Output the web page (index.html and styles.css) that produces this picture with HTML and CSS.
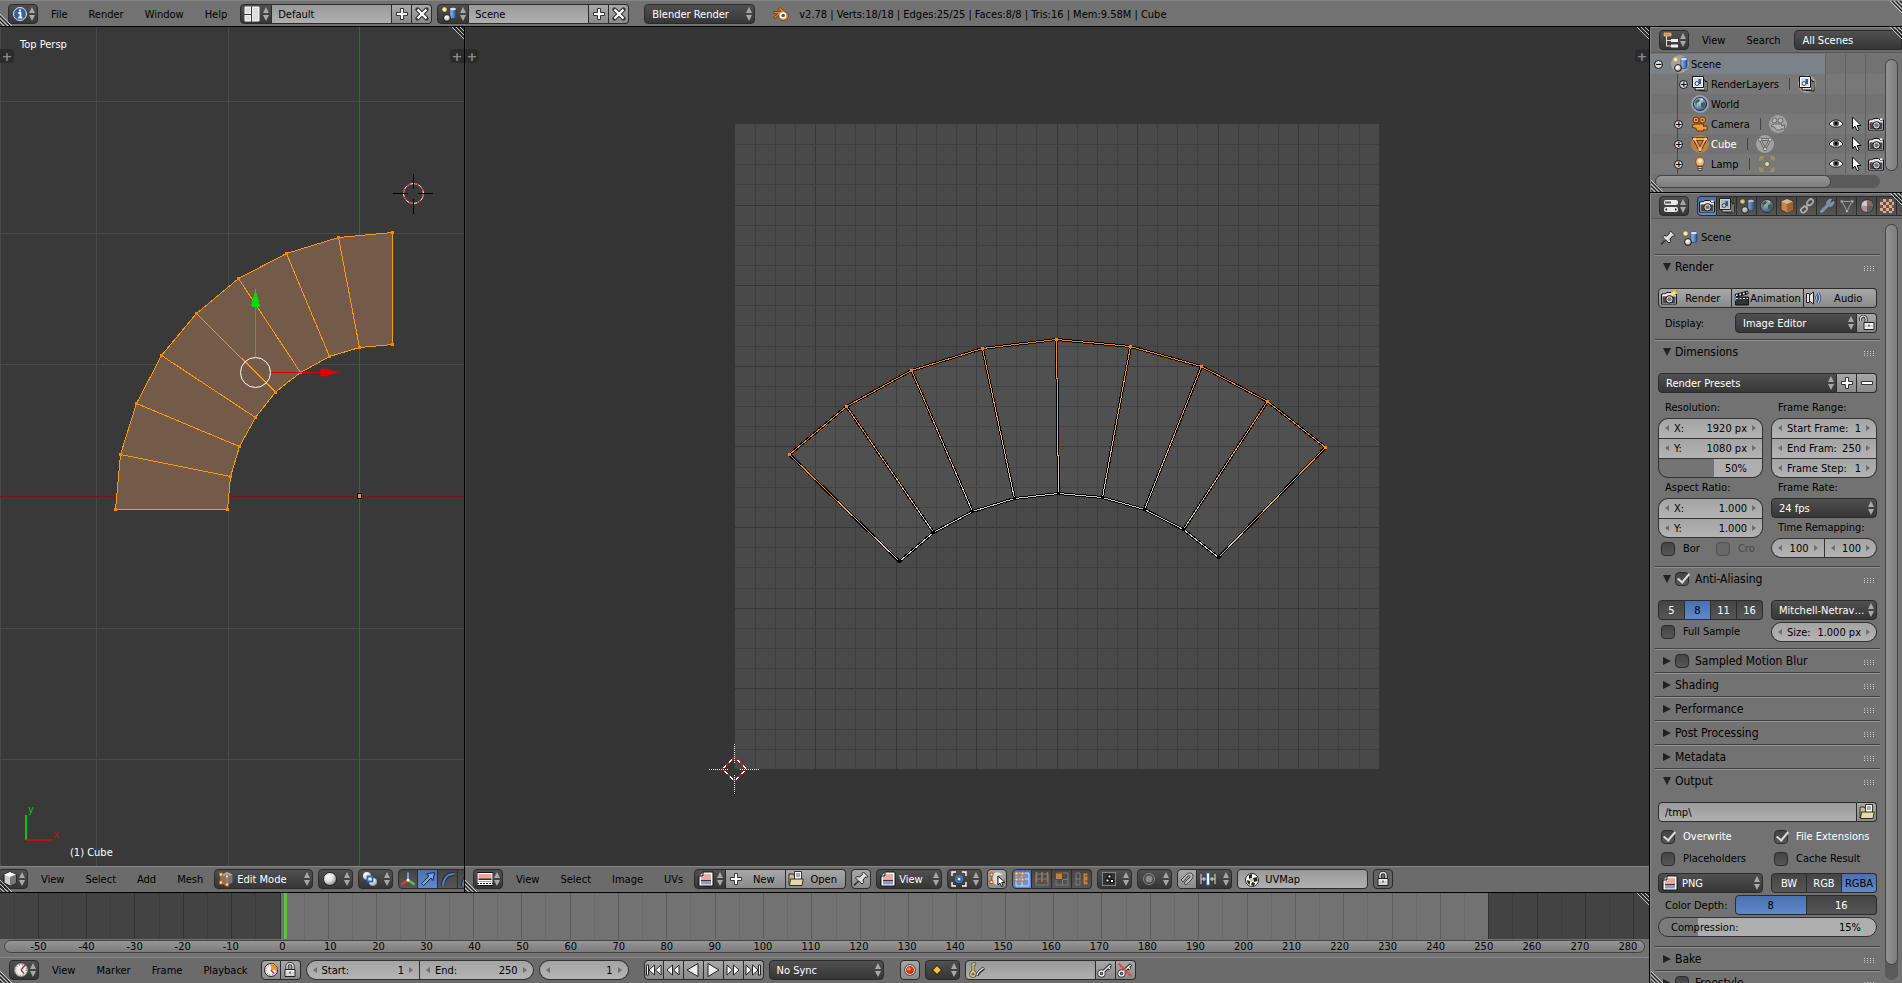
FILE: index.html
```html
<!DOCTYPE html>
<html lang="en">
<head>
    <meta charset="UTF-8">
    <meta name="viewport" content="width=device-width, initial-scale=1.0">
    <title>Blender</title>
    <link rel="stylesheet" href="styles.css">
</head>
<body>
    <!-- icon sprite -->
    <svg class="sprite" aria-hidden="true">
        <defs>
            <linearGradient id="g-blue" x1="0" x2="1"><stop offset="0" stop-color="#9fc0ee"/><stop offset="1" stop-color="#2a56a0"/></linearGradient>
            <radialGradient id="g-ball" cx=".35" cy=".3" r=".8"><stop offset="0" stop-color="#fff"/><stop offset=".5" stop-color="#ddd"/><stop offset="1" stop-color="#777"/></radialGradient>
            <radialGradient id="g-globe" cx=".35" cy=".3" r=".8"><stop offset="0" stop-color="#cfe0f5"/><stop offset="1" stop-color="#32527e"/></radialGradient>
        </defs>
        <symbol id="arrows" viewBox="0 0 8 14"><path d="M4 0l3 6H1zM4 14l3-6H1z" fill="#a8a8a8"/></symbol>
        <symbol id="corner" viewBox="0 0 12 12"><path d="M0 0l12 12M4 0l8 8M8 0l4 4" stroke="#c4c4c4"/><path d="M2 0l10 10M6 0l6 6M10 0l2 2" stroke="#222"/></symbol>
        <symbol id="corner-b" viewBox="0 0 12 12"><path d="M0 0l12 12M0 4l8 8M0 8l4 4" stroke="#c4c4c4"/><path d="M0 2l10 10M0 6l6 6M0 10l2 2" stroke="#222"/></symbol>
        <symbol id="info" viewBox="0 0 16 16"><circle cx="8" cy="8" r="6.5" fill="#3b5f9c" stroke="#dfe6f2"/><path d="M8 3.4v2M6.3 7H8.5v4.5M6.3 11.7h4" stroke="#fff" stroke-width="1.8" fill="none"/></symbol>
        <symbol id="layout" viewBox="0 0 16 16"><path d="M1 1h6v7H1zM1 9h6v6H1zM8 1h7v14H8z" fill="#ddd" stroke="#fff"/><path d="M7.5 1v14M1 8.5h6" stroke="#333"/></symbol>
        <symbol id="scene" viewBox="0 0 16 16"><path d="M9 3c0-2 6-2 6 0v8c0 2-6 2-6 0z" fill="url(#g-blue)" stroke="#1c3660" stroke-width=".6"/><ellipse cx="12" cy="3" rx="3" ry="1.3" fill="#cfe0f8"/><circle cx="6" cy="12" r="3.4" fill="url(#g-ball)" stroke="#111"/><circle cx="3.5" cy="3.5" r="2" fill="#fffbd0" stroke="#d5b92e"/></symbol>
        <symbol id="plus" viewBox="0 0 16 16"><path d="M6.5 2.5h3v4h4v3h-4v4h-3v-4h-4v-3h4z" fill="#fff" stroke="#333"/></symbol>
        <symbol id="minus" viewBox="0 0 16 16"><path d="M2.5 6.5h11v3h-11z" fill="#fff" stroke="#333"/></symbol>
        <symbol id="cross" viewBox="0 0 16 16"><path d="M3.5 3.5l9 9M12.5 3.5l-9 9" stroke="#333" stroke-width="4.4" stroke-linecap="round"/><path d="M3.5 3.5l9 9M12.5 3.5l-9 9" stroke="#fff" stroke-width="2.2"/></symbol>
        <symbol id="blender" viewBox="0 0 16 16"><path d="M1 5.5h7L5.5 3l1.5-1.5 7 5.5c2.500 2.500 1.500 7.500-3.500 7.500-4 0-5.800-3-5-5.500L2 12.500.8 11l4-3.500H1z" fill="#f0871c" stroke="#5a3207" stroke-width=".7"/><circle cx="10" cy="9.5" r="3.3" fill="#fff"/><circle cx="10.2" cy="9.5" r="1.8" fill="#2c5fae"/></symbol>
        <symbol id="outliner" viewBox="0 0 16 16"><path d="M1 1h7v3H1z" fill="#e8893a" stroke="#ffd9a8" stroke-width=".6"/><path d="M3.5 4v10H8M3.5 8.5H8" stroke="#ddd" fill="none"/><path d="M8 7h7v3H8zM8 12.5h7v3H8z" fill="#eee"/></symbol>
        <symbol id="layers" viewBox="0 0 16 16"><path d="M6 6.5l9-1v9.5l-8-.5z" fill="#efeecb" stroke="#111"/><path d="M3 4h10v10H3z" fill="#ddd" stroke="#111"/><path d="M.5.5h11v11H.5z" fill="#fff" stroke="#111"/><path d="M2 2h8v8H2z" fill="#c9dcf2"/><path d="M6.5 3H9v5H6.5z" fill="#2c5aa6"/><circle cx="5" cy="7.5" r="1.9" fill="#fff" stroke="#111" stroke-width=".8"/></symbol>
        <symbol id="world" viewBox="0 0 16 16"><circle cx="8" cy="8" r="6.5" fill="url(#g-globe)" stroke="#1d2c44"/><path d="M3 5l3-2 2 1-1 2-2 1-1 3zM9 7l3-1 1.5 2-1.5 3-2 1-1-2z" fill="#40663d"/><path d="M8 2l3 1-1 2z" fill="#dfeaf7"/></symbol>
        <symbol id="movie" viewBox="0 0 16 16"><g fill="#f0993c" stroke="#6a3306"><circle cx="4" cy="4" r="3"/><circle cx="10.5" cy="4" r="3"/><path d="M3.5 8h8v2.5l3.5-1v5l-3.5-1V15h-6l-2-3-3-.5V9z"/></g><g fill="#6a3306"><circle cx="4" cy="4" r="1"/><circle cx="10.5" cy="4" r="1"/></g></symbol>
        <symbol id="movie-data" viewBox="0 0 16 16"><g fill="#b4b4b4" stroke="#6b6b6b"><circle cx="4.5" cy="4.5" r="2.5"/><circle cx="10.5" cy="4.5" r="2.5"/><path d="M4.5 8h7v2l3-1v4.5l-3-1V14h-5l-2-3-3-.5V9z"/></g></symbol>
        <symbol id="mesh" viewBox="0 0 16 16"><path d="M2.5 3h11L8 13.5z" fill="none" stroke="#4a2a08" stroke-width="3.4"/><path d="M2.5 3h11L8 13.5z" fill="none" stroke="#f6a555" stroke-width="1.8"/><circle cx="2.5" cy="3" r="1.6" fill="#ffc98c"/><circle cx="13.5" cy="3" r="1.6" fill="#ffc98c"/><circle cx="8" cy="13.5" r="1.6" fill="#ffc98c"/></symbol>
        <symbol id="mesh-data" viewBox="0 0 16 16"><path d="M3 3.5h10L8 13z" fill="none" stroke="#555" stroke-width="2.4"/><path d="M3 3.5h10L8 13z" fill="none" stroke="#bbb"/><g fill="#d0d0d0" stroke="#555" stroke-width=".7"><circle cx="3" cy="3.5" r="1.7"/><circle cx="13" cy="3.5" r="1.7"/><circle cx="8" cy="13" r="1.7"/></g></symbol>
        <symbol id="lamp" viewBox="0 0 16 16"><path d="M5.5 10C2 6 4 1 8 1s6 5 2.500 9z" fill="#f7b877" stroke="#7a4510"/><circle cx="8" cy="5" r="1.8" fill="#fff3df"/><path d="M6 10.5h4v4H6z" fill="#ddd" stroke="#444"/><path d="M6 12.5h4" stroke="#444"/></symbol>
        <symbol id="lamp-data" viewBox="0 0 16 16"><circle cx="8" cy="8" r="2.5" fill="#dfdca6" stroke="#6e6942"/><path d="M1 5V1h4M11 1h4v4M15 11v4h-4M5 15H1v-4M2 2l2.500 2.500M14 2l-2.500 2.500M14 14l-2.500-2.500M2 14l2.500-2.500" fill="none" stroke="#b8a552"/></symbol>
        <symbol id="eye" viewBox="0 0 16 16"><path d="M1 8c4-5.500 10-5.500 14 0-4 4.500-10 4.500-14 0z" fill="#eee" stroke="#222"/><circle cx="8" cy="7.5" r="3" fill="#555"/><circle cx="8" cy="7.5" r="1.4" fill="#000"/></symbol>
        <symbol id="pointer" viewBox="0 0 16 16"><path d="M4.5 1v11.5l2.600-2.300 1.900 4.500 2-.9-1.900-4.300H13z" fill="#fff" stroke="#111"/></symbol>
        <symbol id="photo" viewBox="0 0 16 16"><path d="M.5 4h4l1-1.500h5L12 4h3.500v10H.5z" fill="#e4e4e4" stroke="#151515"/><path d="M1.5 6.500h13V13h-13z" fill="#4a4a4a"/><path d="M2 5h3.5" stroke="#fff"/><circle cx="8.500" cy="9.300" r="3.700" fill="#d8d8d8" stroke="#111"/><circle cx="8.500" cy="9.300" r="2" fill="#6b6f80"/><path d="M12 2.500h2.500V4H12z" fill="#fff"/><circle cx="3" cy="7" r="1" fill="#e03020"/></symbol>
        <symbol id="photo-new" viewBox="0 0 16 16"><use href="#photo"/><path d="M13 0v6M10 3h6" stroke="#f0c020" stroke-width="2"/><path d="M13 1.5v3M11.5 3h3" stroke="#fff8c0"/></symbol>
        <symbol id="props" viewBox="0 0 16 16"><rect x="1" y="2" width="14" height="5" rx="2" fill="#e8e8e8"/><path d="M2 3.5h6v2H2z" fill="#555"/><rect x="1" y="9" width="14" height="5" rx="2" fill="#e8e8e8"/><path d="M4 10l-2 1.5L4 13zM12 10l2 1.5-2 1.5z" fill="#222"/></symbol>
        <symbol id="cube" viewBox="0 0 16 16"><path d="M8 1l6 2.500v8.500L8 15l-6-3V3.500z" fill="#e89a50" stroke="#4a2a08"/><path d="M8 1l6 2.500L8 6 2 3.500z" fill="#ffdcae"/><path d="M8 6l6-2.500v8.500L8 15z" fill="#bb6c27"/></symbol>
        <symbol id="link" viewBox="0 0 16 16"><g fill="none" stroke="#ccc" stroke-width="1.7"><rect x="7.5" y="2" width="7" height="4.6" rx="2.3" transform="rotate(-45 11 4.3)"/><rect x="1.5" y="9.2" width="7" height="4.6" rx="2.3" transform="rotate(-45 5 11.5)"/><path d="M6 10l4-4"/></g></symbol>
        <symbol id="wrench" viewBox="0 0 16 16"><path d="M2 12.5l6-6C7 3.500 9.500.8 12.500 1.500L10.500 4l1.500 1.500L14.500 3.500c.7 3-2 5.500-5 4.500l-6 6c-1.500 1-2.500-.3-1.500-1.500z" fill="#7f9fd0" stroke="#d5dff0" stroke-width=".7"/></symbol>
        <symbol id="material" viewBox="0 0 16 16"><circle cx="8" cy="8" r="6.3" fill="url(#g-ball)" stroke="#222"/><path d="M8 8V2a6 6 0 016 6z" fill="#b06a6a"/><path d="M8 8h6a6 6 0 01-6 6z" fill="#666"/><path d="M8 8H2a6 6 0 006 6z" fill="#c9a9a9"/></symbol>
        <symbol id="texture" viewBox="0 0 16 16"><path d="M1 1h14v14H1z" fill="#ecd7c2"/><path d="M1 1h3v3H1zM7 1h3v3H7zM13 1h2v3h-2zM4 4h3v3H4zM10 4h3v3h-3zM1 7h3v3H1zM7 7h3v3H7zM13 7h2v3h-2zM4 10h3v3H4zM10 10h3v3h-3zM1 13h3v2H1zM7 13h3v2H7zM13 13h2v2h-2z" fill="#8e4a2f"/></symbol>
        <symbol id="pin" viewBox="0 0 16 16"><path d="M10.5 1l4.500 4.500-1.500.8-1-.3-2.500 3 .5 2.500L9 13 5.800 10 1.500 14.500l-.5-.5L5 9.500 2.500 7 4 5.500l2.500.5 3-2.500-.3-1z" fill="#ddd" stroke="#222"/></symbol>
        <symbol id="clapper" viewBox="0 0 16 16"><path d="M1 4.5L13.5 1l.8 2.800L2 7z" fill="#fff" stroke="#111"/><path d="M4 4l1 2M7.5 3l1 2M11 2l1 2" stroke="#111" stroke-width="2"/><path d="M1.5 7h13v8h-13z" fill="#333" stroke="#111"/><path d="M2 8.5h12" stroke="#ddd" stroke-dasharray="2 1.5"/><path d="M0 6h2v5H0z" fill="#4c86d8"/></symbol>
        <symbol id="speaker" viewBox="0 0 16 16"><path d="M.5 3.500h3v9h-3zM3.500 5L7.500 2v12l-4-3z" fill="#e4e4e4" stroke="#222"/><path d="M9.500 5q2 3 0 6M12 3q3.500 5 0 10" stroke="#2c3d63" stroke-width="2.600" fill="none"/><path d="M9.500 5q2 3 0 6M12 3q3.500 5 0 10" stroke="#a9c1f0" stroke-width="1.300" fill="none"/></symbol>
        <symbol id="lock" viewBox="0 0 16 16"><path d="M5 7V4.5a3 3 0 016 0V7" fill="none" stroke="#222" stroke-width="3.2"/><path d="M5 8V4.5a3 3 0 016 0V8" fill="none" stroke="#ddd" stroke-width="1.5"/><path d="M3 7.5h10v7H3z" fill="#eee" stroke="#222"/><path d="M4 11h8M4 13h8" stroke="#bbb"/><path d="M8 9.5v2" stroke="#111"/></symbol>
        <symbol id="unlock" viewBox="0 0 16 16"><path d="M1.5 6V4a2.800 2.800 0 015.600 0v4" fill="none" stroke="#222" stroke-width="3"/><path d="M1.5 6V4a2.800 2.800 0 015.600 0v4" fill="none" stroke="#ddd" stroke-width="1.3"/><path d="M5 7.5h10v7H5z" fill="#eee" stroke="#222"/><path d="M6 11h8" stroke="#bbb"/><path d="M10 9.5v2" stroke="#111"/></symbol>
        <symbol id="folder" viewBox="0 0 16 16"><path d="M1 3h4l1 1.5h3V14H1z" fill="#c9bf94" stroke="#332e1c"/><path d="M6.5.5h7v9h-7z" fill="#fff" stroke="#333"/><path d="M8 3h4M8 5h4" stroke="#555"/><path d="M2.5 8h12.800L14 14.500H1.500z" fill="#e2d9b0" stroke="#332e1c"/></symbol>
        <symbol id="image" viewBox="0 0 16 16"><path d="M5 1h10v14H1V5z" fill="#fff" stroke="#111"/><path d="M5 1v4H1" fill="#ccc" stroke="#111"/><path d="M3 6h10v3H3zM6 3h7v3H6z" fill="#e9aaa0"/><path d="M3 9h10v1.200H3z" fill="#54302c"/><path d="M3 10h10v3.500H3z" fill="#8d9cc4"/></symbol>
        <symbol id="uv-editor" viewBox="0 0 16 16"><path d="M0 1.5h16v13H0z" fill="#fff" stroke="#111"/><path d="M1.5 3h13v5h-13z" fill="#e9a49b"/><path d="M1.5 7.5h13v1.5h-13z" fill="#3a2928"/><path d="M1.5 10h13v1h-13z" fill="#8d9cc4"/><path d="M0 12.5h16" stroke="#222" stroke-dasharray="2 1"/></symbol>
        <symbol id="view3d" viewBox="0 0 16 16"><path d="M8 1l6 2.500v8.500L8 15l-6-3V3.500z" fill="#ccc" stroke="#111"/><path d="M8 1l6 2.500L8 6 2 3.500z" fill="#fff"/><path d="M8 6l6-2.500v8.500L8 15z" fill="#777"/></symbol>
        <symbol id="edit" viewBox="0 0 16 16"><path d="M9 1l5.500 2.500v8L9 14 4 11.500V3.500z" fill="#777"/><path d="M9 1l5.500 2.500L9 6 4 3.500z" fill="#aaa"/><path d="M3 3.500V12l6 2V5.500z" fill="none" stroke="#d99550"/><g fill="#ffe0b5" stroke="#c86a10"><path d="M1.500 2h3v3h-3zM7.500 4h3v3h-3zM1.500 10h3v3h-3zM7.500 12h3v3h-3z"/></g></symbol>
        <symbol id="solid" viewBox="0 0 16 16"><circle cx="8" cy="8" r="6.5" fill="url(#g-ball)" stroke="#222"/></symbol>
        <symbol id="pivot" viewBox="0 0 16 16"><circle cx="5" cy="5" r="4" fill="url(#g-ball)"/><circle cx="11" cy="11" r="4" fill="url(#g-ball)"/><path d="M5.5 5.5h5v5h-5z" fill="#fff" stroke="#2867c8" stroke-width="1.8"/></symbol>
        <symbol id="axes" viewBox="0 0 16 16"><path d="M8 9V1.5" stroke="#6d9cf0" stroke-width="2"/><path d="M8 9l-6.500 4.500" stroke="#e03a30" stroke-width="2.4"/><path d="M8 9l6.500 4.500" stroke="#62c045" stroke-width="2.4"/><circle cx="8" cy="9" r="1.5" fill="#fff"/></symbol>
        <symbol id="translate" viewBox="0 0 16 16"><path d="M1.5 12.5L9 5 6.500 3 14.500 1.500 13 9.500l-2-2.500-7.500 7.500z" fill="#7ba4e2" stroke="#16294a"/></symbol>
        <symbol id="rotate" viewBox="0 0 16 16"><path d="M3 15C3 8 7 3 14 3" fill="none" stroke="#16294a" stroke-width="4"/><path d="M3 15C3 8 7 3 14 3" fill="none" stroke="#5b7fb4" stroke-width="2"/></symbol>
        <symbol id="bounds" viewBox="0 0 16 16"><path d="M1 5V1h4M11 1h4v4M15 11v4h-4M5 15H1v-4" fill="none" stroke="#fff" stroke-width="1.4"/><circle cx="8" cy="8" r="4" fill="#777"/><path d="M6 6h4v4H6z" fill="#fff" stroke="#1764d8" stroke-width="1.5"/></symbol>
        <symbol id="sync" viewBox="0 0 16 16"><path d="M8 1l6 2v8l-6 3-4-2V3z" fill="#ddd"/><path d="M8 5l6-2v8l-6 3z" fill="#aaa"/><path d="M2.5 3.5v8" stroke="#b05a10"/><g fill="#ffe0b5" stroke="#b05a10"><path d="M1 2h3v3H1zM1 9.5h3v3H1z"/></g><path d="M9 5v9l2-1.800 1.500 3.300 1.700-.8-1.500-3.300H16z" fill="#fff" stroke="#111"/></symbol>
        <symbol id="uv-vert" viewBox="0 0 16 16"><path d="M2 2h13v13H2zM2 8h13M8 2v13" fill="#6f93d2" stroke="#cfdcf5"/><g fill="#ffe0b5" stroke="#c86a10"><path d="M1 1h3v3H1zM7 1h3v3H7zM1 7h3v3H1zM7 7h3v3H7z"/></g></symbol>
        <symbol id="uv-edge" viewBox="0 0 16 16"><path d="M2 3h12v11H2zM2 8h12" fill="none" stroke="#7d7d7d"/><path d="M2.5 1v10M8 1v10M13.5 1v10" stroke="#a67645" stroke-width="1.6"/></symbol>
        <symbol id="uv-face" viewBox="0 0 16 16"><path d="M2 2h12v12H2zM2 8.5h12M8.5 2v12" fill="none" stroke="#7d7d7d"/><path d="M1.5 2h7v6.5h-7z" fill="#b98249" stroke="#6e4417"/></symbol>
        <symbol id="uv-island" viewBox="0 0 16 16"><path d="M2 2h4v12H2zM2 8h4" fill="none" stroke="#7d7d7d"/><path d="M9 2h5v12H9z" fill="#b98249" stroke="#6e4417"/><path d="M11 5h3M11 10h3" stroke="#6e4417"/></symbol>
        <symbol id="sticky" viewBox="0 0 16 16"><path d="M1.5 1.5h13v13h-13z" fill="#333" stroke="#ccc" stroke-dasharray="1 1"/><path d="M7 4h3v3H7zM5 8h3v3H5zM9.5 8.5h3v3h-3z" fill="#fff" stroke="#000"/></symbol>
        <symbol id="prop-off" viewBox="0 0 16 16"><circle cx="8" cy="8" r="5.5" fill="none" stroke="#888"/><circle cx="8" cy="8" r="3.5" fill="#8a8a8a"/></symbol>
        <symbol id="magnet" viewBox="0 0 16 16"><path d="M2 9l6-6c4-3 8 1 5 5l-6 6-2-2 6-6c1-1-1-2-2-1l-5 6z" fill="#bbb" stroke="#444"/></symbol>
        <symbol id="increment" viewBox="0 0 16 16"><path d="M1 3v10M15 3v10M4 6v4M12 6v4M1 8h14" stroke="#ddd"/><path d="M6.5 2h3v12h-3z" fill="#fff" stroke="#3b74d0"/></symbol>
        <symbol id="uvmap" viewBox="0 0 16 16"><circle cx="8" cy="8" r="6.5" fill="#fff" stroke="#222"/><path d="M5 3l3-1v4L5 7zM9 6l4-1 .5 4-3.500 1zM3 8l3 1v4L3.500 11zM8 10l3 1-1 3-3-1z" fill="#222"/><path d="M8 6l2 3-3 1-2-3z" fill="#d9c892"/></symbol>
        <symbol id="clock" viewBox="0 0 16 16"><circle cx="8" cy="8" r="6.5" fill="#eee" stroke="#888"/><path d="M8 8l4-5M8 8l3 3.500" stroke="#c22" stroke-width="1.3"/><circle cx="8" cy="8" r="5.3" fill="none" stroke="#444" stroke-dasharray=".8 2"/></symbol>
        <symbol id="range" viewBox="0 0 16 16"><circle cx="8" cy="8" r="6.5" fill="#eee" stroke="#222"/><path d="M8 8V1.5A6.500 6.500 0 0114.500 8z" fill="#f79b1e"/><path d="M8 8l3 3.500" stroke="#c22" stroke-width="1.3"/><circle cx="8" cy="8" r="5" fill="none" stroke="#444" stroke-dasharray=".8 2"/></symbol>
        <symbol id="rec" viewBox="0 0 16 16"><circle cx="8" cy="8" r="4.5" fill="#d8320a" stroke="#ddd"/><circle cx="8" cy="8" r="5.5" fill="none" stroke="#555"/><circle cx="7" cy="7" r="1.8" fill="#f48a62"/></symbol>
        <symbol id="keyframe" viewBox="0 0 16 16"><path d="M8 3.500l4.500 4.500L8 12.500 3.500 8z" fill="#ffbe32" stroke="#111"/></symbol>
        <symbol id="key" viewBox="0 0 16 16"><circle cx="4.5" cy="11.5" r="2.5" fill="none" stroke="#222" stroke-width="3"/><path d="M6 10l8-7.500M11 5l2 2.500" stroke="#222" stroke-width="3.4"/><circle cx="4.5" cy="11.5" r="2.5" fill="none" stroke="#eee" stroke-width="1.5"/><path d="M6.5 9.5l7-6.500M11 5l2 2" stroke="#eee" stroke-width="1.5"/></symbol>
        <symbol id="key-del" viewBox="0 0 16 16"><use href="#key"/><path d="M1.5 1.5l13 13" stroke="#dd4a3a" stroke-width="1.8"/></symbol>
        <symbol id="keyset" viewBox="0 0 16 16"><g fill="none" stroke="#4b4422" stroke-width="3"><circle cx="4" cy="12" r="2.2"/><path d="M4 10V1M4 2h3"/></g><g fill="none" stroke="#e2d695" stroke-width="1.4"><circle cx="4" cy="12" r="2.2"/><path d="M4 10V1.5M4 2h2.500"/></g><path d="M8 14c0-3 3-5 7-8" stroke="#222" stroke-width="3.2" fill="none"/><path d="M8 13.5c0-3 3-4.500 6.500-7.500" stroke="#eee" stroke-width="1.4" fill="none"/></symbol>
        <symbol id="first" viewBox="0 0 16 16"><path d="M.5 3h2v10h-2zM8.500 3v10L3 8zM15 3v10L9.500 8z" fill="#fff" stroke="#222"/></symbol>
        <symbol id="prev" viewBox="0 0 16 16"><path d="M7.500 3v10L2 8zM14 3v10L8.500 8z" fill="#fff" stroke="#222"/></symbol>
        <symbol id="back" viewBox="0 0 16 16"><path d="M13 1.500v13L2 8z" fill="#eee" stroke="#222"/></symbol>
    </svg>

    <div class="app">
        <header class="bar topbar">
            <button class="menu w30" aria-label="Editor type"><svg class="icon"><use href="#info"/></svg><svg class="arrows"><use href="#arrows"/></svg></button>
            <nav class="menus">
                <a href="#">File</a><a href="#">Render</a><a href="#">Window</a><a href="#">Help</a>
            </nav>
            <div class="group data-block">
                <button class="menu" aria-label="Browse screens"><svg class="icon"><use href="#layout"/></svg><svg class="arrows"><use href="#arrows"/></svg></button>
                <input class="field" value="Default" aria-label="Screen">
                <button class="tool" aria-label="Add screen"><svg class="icon"><use href="#plus"/></svg></button>
                <button class="tool" aria-label="Delete screen"><svg class="icon"><use href="#cross"/></svg></button>
            </div>
            <div class="group data-block">
                <button class="menu" aria-label="Browse scenes"><svg class="icon"><use href="#scene"/></svg><svg class="arrows"><use href="#arrows"/></svg></button>
                <input class="field" value="Scene" aria-label="Scene">
                <button class="tool" aria-label="Add scene"><svg class="icon"><use href="#plus"/></svg></button>
                <button class="tool" aria-label="Delete scene"><svg class="icon"><use href="#cross"/></svg></button>
            </div>
            <div class="menu engine"><select aria-label="Engine"><option>Blender Render</option></select><svg class="arrows"><use href="#arrows"/></svg></div>
            <div class="stats"><svg class="icon"><use href="#blender"/></svg><span>v2.78 | Verts:18/18 | Edges:25/25 | Faces:8/8 | Tris:16 | Mem:9.58M | Cube</span></div>
            <svg class="corner top"><use href="#corner"/></svg>
            <svg class="corner bottom"><use href="#corner-b"/></svg>
        </header>

        <div class="main">
            <div class="work">
                <div class="views">
                    <section class="area">
                        <div class="viewport view-3d">
                            <svg class="canvas" viewBox="0 27 464 839" preserveAspectRatio="xMidYMid slice">
                                <path d="M.5 27v839M0 101.500h464M0 233.500h464M0 364.500h464M0 628.500h464M0 759.500h464M96.500 27v839M228.500 27v839" stroke="#4a4a4a"/>
                                <path d="M0 496.500h464" stroke="#7c1519"/>
                                <path d="M359.500 27v839" stroke="#197a19"/>
                                <g id="mesh3d"></g>
                                <path d="M357.500 493.500h4v5h-4z" fill="#d9944a" stroke="#000"/>
                                <path d="M255.500 357V307" stroke="#1fc41f"/><path d="M255.500 289l4.500 17q-4.500 3-9 0z" fill="#00dc00"/>
                                <path d="M271 372.500h50" stroke="#dc0000"/><path d="M339 372.500l-17-4.500q-4 4.500 0 9z" fill="#dc0000"/>
                                <circle cx="255.500" cy="372.500" r="15" fill="none" stroke="#fff"/>
                                <circle cx="413.500" cy="193.500" r="10" fill="none" stroke="#fff"/>
                                <circle cx="413.500" cy="193.500" r="10" fill="none" stroke="#f00" stroke-dasharray="4 4"/>
                                <path d="M393 193.500h15M418 193.500h15M413.500 174v15M413.500 199v15" stroke="#000"/>
                                <path d="M26 815v25" stroke="#0ec40e" stroke-width="2"/><path d="M26 840h25" stroke="#c40e0e" stroke-width="2"/>
                                <text x="28" y="813" class="axis-y">y</text><text x="53" y="838" class="axis-x">x</text>
                            </svg>
                            <span class="view-name">Top Persp</span>
                            <span class="object-name">(1) Cube</span>
                            <button class="tab left" aria-label="Tool shelf">+</button>
                            <button class="tab right" aria-label="Properties">+</button>
                            <svg class="corner top"><use href="#corner"/></svg>
                        </div>
                        <div class="bar view-bar">
                            <button class="menu w30" aria-label="Editor type"><svg class="icon"><use href="#view3d"/></svg><svg class="arrows"><use href="#arrows"/></svg></button>
                            <nav class="menus">
                                <a href="#">View</a><a href="#">Select</a><a href="#">Add</a><a href="#">Mesh</a>
                            </nav>
                            <div class="menu mode"><svg class="icon"><use href="#edit"/></svg><select aria-label="Mode"><option>Edit Mode</option></select><svg class="arrows"><use href="#arrows"/></svg></div>
                            <button class="menu w35" aria-label="Shading"><svg class="icon"><use href="#solid"/></svg><svg class="arrows"><use href="#arrows"/></svg></button>
                            <button class="menu w35" aria-label="Pivot"><svg class="icon"><use href="#pivot"/></svg><svg class="arrows"><use href="#arrows"/></svg></button>
                            <div class="group">
                                <button class="radio" aria-label="Manipulator"><svg class="icon"><use href="#axes"/></svg></button>
                                <button class="radio on" aria-label="Translate"><svg class="icon"><use href="#translate"/></svg></button>
                                <button class="radio" aria-label="Rotate"><svg class="icon"><use href="#rotate"/></svg></button>
                                <button class="radio" aria-label="Scale"><svg class="icon"><use href="#rotate"/></svg></button>
                            </div>
                            <svg class="corner bottom"><use href="#corner-b"/></svg>
                        </div>
                    </section>

                    <section class="area">
                        <div class="viewport view-uv">
                            <svg class="canvas" viewBox="465 27 1184 839" preserveAspectRatio="xMidYMid slice">
                                <path d="M465.500 27v839" stroke="#444"/>
                                <rect x="735" y="124" width="644" height="645" fill="#494949"/>
                                <g id="uvgrid"></g>
                                <g id="uvmesh"></g>
                                <path d="M734.500 757l12 12-12 12-12-12z" fill="none" stroke="#fff"/>
                                <path d="M734.500 757l12 12-12 12-12-12z" fill="none" stroke="#e01010" stroke-dasharray="4 4"/>
                                <path d="M709 769.500h19M740 769.500h19M734.500 744v19M734.500 775v19" stroke="#fff" stroke-dasharray="1 1"/>
                            </svg>
                            <button class="tab left" aria-label="Tool shelf">+</button>
                            <button class="tab right" aria-label="Properties">+</button>
                            <svg class="corner top"><use href="#corner"/></svg>
                        </div>
                        <div class="bar uv-bar">
                            <button class="menu w30" aria-label="Editor type"><svg class="icon"><use href="#uv-editor"/></svg><svg class="arrows"><use href="#arrows"/></svg></button>
                            <nav class="menus">
                                <a href="#">View</a><a href="#">Select</a><a href="#">Image</a><a href="#">UVs</a>
                            </nav>
                            <div class="group new-open">
                                <button class="menu" aria-label="Browse images"><svg class="icon"><use href="#image"/></svg><svg class="arrows"><use href="#arrows"/></svg></button>
                                <button class="tool text"><svg class="icon"><use href="#plus"/></svg><span>New</span></button>
                                <button class="tool text"><svg class="icon"><use href="#folder"/></svg><span>Open</span></button>
                            </div>
                            <button class="tool" aria-label="Pin"><svg class="icon"><use href="#pin"/></svg></button>
                            <div class="menu channel"><svg class="icon"><use href="#image"/></svg><select aria-label="Mode"><option>View</option></select><svg class="arrows"><use href="#arrows"/></svg></div>
                            <button class="menu w35" aria-label="Pivot"><svg class="icon"><use href="#bounds"/></svg><svg class="arrows"><use href="#arrows"/></svg></button>
                            <button class="tool" aria-label="Sync selection"><svg class="icon"><use href="#sync"/></svg></button>
                            <div class="group">
                                <button class="radio on" aria-label="Vertex"><svg class="icon"><use href="#uv-vert"/></svg></button>
                                <button class="radio" aria-label="Edge"><svg class="icon"><use href="#uv-edge"/></svg></button>
                                <button class="radio" aria-label="Face"><svg class="icon"><use href="#uv-face"/></svg></button>
                                <button class="radio" aria-label="Island"><svg class="icon"><use href="#uv-island"/></svg></button>
                            </div>
                            <button class="menu w35" aria-label="Sticky selection"><svg class="icon"><use href="#sticky"/></svg><svg class="arrows"><use href="#arrows"/></svg></button>
                            <button class="menu w35" aria-label="Proportional editing"><svg class="icon"><use href="#prop-off"/></svg><svg class="arrows"><use href="#arrows"/></svg></button>
                            <div class="group">
                                <button class="tool" aria-label="Snap"><svg class="icon"><use href="#magnet"/></svg></button>
                                <button class="menu w35" aria-label="Snap element"><svg class="icon"><use href="#increment"/></svg><svg class="arrows"><use href="#arrows"/></svg></button>
                            </div>
                            <label class="field uvmap"><svg class="icon"><use href="#uvmap"/></svg><input value="UVMap" aria-label="UV map"></label>
                            <button class="tool flat" aria-label="Lock"><svg class="icon"><use href="#lock"/></svg></button>
                            <svg class="corner bottom"><use href="#corner-b"/></svg>
                        </div>
                    </section>
                </div>

                <section class="timeline">
                    <svg class="frames" id="frames" viewBox="0 0 1649 46" preserveAspectRatio="none"></svg>
                    <div class="ruler"><div class="ruler-labels" id="ruler"></div></div>
                    <div class="bar time-bar">
                        <button class="menu w30" aria-label="Editor type"><svg class="icon"><use href="#clock"/></svg><svg class="arrows"><use href="#arrows"/></svg></button>
                        <nav class="menus">
                            <a href="#">View</a><a href="#">Marker</a><a href="#">Frame</a><a href="#">Playback</a>
                        </nav>
                        <div class="group">
                            <button class="tool" aria-label="Use preview range"><svg class="icon"><use href="#range"/></svg></button>
                            <button class="tool" aria-label="Lock time cursor"><svg class="icon"><use href="#lock"/></svg></button>
                        </div>
                        <div class="numbers inline frame-range">
                            <label class="num">Start:<input value="1"></label>
                            <label class="num">End:<input value="250"></label>
                        </div>
                        <div class="numbers inline">
                            <label class="num current"><input value="1" aria-label="Current frame"></label>
                        </div>
                        <div class="group play">
                            <button class="tool" aria-label="Jump to start"><svg class="icon"><use href="#first"/></svg></button>
                            <button class="tool" aria-label="Previous keyframe"><svg class="icon"><use href="#prev"/></svg></button>
                            <button class="tool" aria-label="Play reversed"><svg class="icon"><use href="#back"/></svg></button>
                            <button class="tool flip" aria-label="Play"><svg class="icon"><use href="#back"/></svg></button>
                            <button class="tool flip" aria-label="Next keyframe"><svg class="icon"><use href="#prev"/></svg></button>
                            <button class="tool flip" aria-label="Jump to end"><svg class="icon"><use href="#first"/></svg></button>
                        </div>
                        <div class="menu sync"><select aria-label="Sync"><option>No Sync</option></select><svg class="arrows"><use href="#arrows"/></svg></div>
                        <button class="tool" aria-label="Auto keyframe"><svg class="icon"><use href="#rec"/></svg></button>
                        <button class="menu w35" aria-label="Keyframe type"><svg class="icon"><use href="#keyframe"/></svg><svg class="arrows"><use href="#arrows"/></svg></button>
                        <div class="group">
                            <label class="field keying"><svg class="icon"><use href="#keyset"/></svg><input aria-label="Keying set"></label>
                            <button class="tool" aria-label="Insert keyframe"><svg class="icon"><use href="#key"/></svg></button>
                            <button class="tool" aria-label="Delete keyframe"><svg class="icon"><use href="#key-del"/></svg></button>
                        </div>
                    </div>
                    <svg class="corner top"><use href="#corner"/></svg>
                    <svg class="corner bottom"><use href="#corner-b"/></svg>
                </section>
            </div>

            <aside class="side">
                <section class="outliner">
                    <div class="bar side-bar">
                        <button class="menu w30" aria-label="Editor type"><svg class="icon"><use href="#outliner"/></svg><svg class="arrows"><use href="#arrows"/></svg></button>
                        <nav class="menus"><a href="#">View</a><a href="#">Search</a></nav>
                        <div class="menu display-mode"><select aria-label="Display mode"><option>All Scenes</option></select></div>
                    </div>
                    <div class="tree">
                        <ul>
                            <li class="active"><div class="name"><i class="toggle">−</i><svg class="icon halo"><use href="#scene"/></svg>Scene</div><b></b><b></b><b></b></li>
                            <li class="child deep"><div class="name"><i class="toggle">+</i><svg class="icon"><use href="#layers"/></svg>RenderLayers<em></em><svg class="icon halo"><use href="#layers"/></svg></div><b></b><b></b><b></b></li>
                            <li class="child bare"><div class="name"><svg class="icon halo blue"><use href="#world"/></svg>World</div><b></b><b></b><b></b></li>
                            <li class="child"><div class="name"><i class="toggle">+</i><svg class="icon"><use href="#movie"/></svg>Camera<em></em><svg class="icon halo"><use href="#movie-data"/></svg></div><b><svg class="icon"><use href="#eye"/></svg></b><b><svg class="icon"><use href="#pointer"/></svg></b><b><svg class="icon"><use href="#photo"/></svg></b></li>
                            <li class="child selected"><div class="name"><i class="toggle">+</i><svg class="icon halo orange"><use href="#mesh"/></svg>Cube<em></em><svg class="icon halo"><use href="#mesh-data"/></svg></div><b><svg class="icon"><use href="#eye"/></svg></b><b><svg class="icon"><use href="#pointer"/></svg></b><b><svg class="icon"><use href="#photo"/></svg></b></li>
                            <li class="child"><div class="name"><i class="toggle">+</i><svg class="icon"><use href="#lamp"/></svg>Lamp<em></em><svg class="icon"><use href="#lamp-data"/></svg></div><b><svg class="icon"><use href="#eye"/></svg></b><b><svg class="icon"><use href="#pointer"/></svg></b><b><svg class="icon"><use href="#photo"/></svg></b></li>
                        </ul>
                        <div class="scroll-v"><span></span></div>
                    </div>
                    <div class="scroll-h"><span></span></div>
                    <svg class="corner top"><use href="#corner"/></svg>
                    <svg class="corner bottom"><use href="#corner-b"/></svg>
                </section>

                <section class="properties">
                    <div class="bar side-bar">
                        <button class="menu w30" aria-label="Editor type"><svg class="icon"><use href="#props"/></svg><svg class="arrows"><use href="#arrows"/></svg></button>
                        <div class="group tabs">
                            <button class="radio on" aria-label="Render"><svg class="icon"><use href="#photo"/></svg></button>
                            <button class="radio" aria-label="Render layers"><svg class="icon"><use href="#layers"/></svg></button>
                            <button class="radio" aria-label="Scene"><svg class="icon"><use href="#scene"/></svg></button>
                            <button class="radio" aria-label="World"><svg class="icon"><use href="#world"/></svg></button>
                            <button class="radio" aria-label="Object"><svg class="icon"><use href="#cube"/></svg></button>
                            <button class="radio" aria-label="Constraints"><svg class="icon"><use href="#link"/></svg></button>
                            <button class="radio" aria-label="Modifiers"><svg class="icon"><use href="#wrench"/></svg></button>
                            <button class="radio" aria-label="Data"><svg class="icon"><use href="#mesh-data"/></svg></button>
                            <button class="radio" aria-label="Material"><svg class="icon"><use href="#material"/></svg></button>
                            <button class="radio" aria-label="Texture"><svg class="icon"><use href="#texture"/></svg></button>
                            <button class="radio" aria-label="Particles"></button>
                        </div>
                    </div>
                    <div class="props-body">
                        <div class="panels">
                            <div class="context"><svg class="icon"><use href="#pin"/></svg><svg class="icon"><use href="#scene"/></svg>Scene</div>

                            <div class="panel">
                                <h2 class="open">Render</h2>
                                <div class="content">
                                    <div class="group thirds">
                                        <button class="tool text"><svg class="icon"><use href="#photo-new"/></svg><span>Render</span></button>
                                        <button class="tool text"><svg class="icon"><use href="#clapper"/></svg><span>Animation</span></button>
                                        <button class="tool text"><svg class="icon"><use href="#speaker"/></svg><span>Audio</span></button>
                                    </div>
                                    <div class="row">
                                        <label for="display">Display:</label>
                                        <div class="group">
                                            <div class="menu grow"><select id="display"><option>Image Editor</option></select><svg class="arrows"><use href="#arrows"/></svg></div>
                                            <button class="tool" aria-label="Lock interface"><svg class="icon"><use href="#unlock"/></svg></button>
                                        </div>
                                    </div>
                                </div>
                            </div>

                            <div class="panel">
                                <h2 class="open">Dimensions</h2>
                                <div class="content">
                                    <div class="group">
                                        <div class="menu grow"><select aria-label="Presets"><option>Render Presets</option></select><svg class="arrows"><use href="#arrows"/></svg></div>
                                        <button class="tool" aria-label="Add preset"><svg class="icon"><use href="#plus"/></svg></button>
                                        <button class="tool" aria-label="Remove preset"><svg class="icon"><use href="#minus"/></svg></button>
                                    </div>
                                    <div class="columns">
                                        <div>
                                            <p>Resolution:</p>
                                            <div class="numbers">
                                                <label class="num">X:<input value="1920 px"></label>
                                                <label class="num">Y:<input value="1080 px"></label>
                                                <div class="slider half"><input value="50%" aria-label="Scale"></div>
                                            </div>
                                            <p>Aspect Ratio:</p>
                                            <div class="numbers">
                                                <label class="num">X:<input value="1.000"></label>
                                                <label class="num">Y:<input value="1.000"></label>
                                            </div>
                                            <div class="checks">
                                                <label><input type="checkbox">Bor</label>
                                                <label class="disabled"><input type="checkbox" disabled>Cro</label>
                                            </div>
                                        </div>
                                        <div>
                                            <p>Frame Range:</p>
                                            <div class="numbers">
                                                <label class="num">Start Frame:<input value="1"></label>
                                                <label class="num">End Fram:<input value="250"></label>
                                                <label class="num">Frame Step:<input value="1"></label>
                                            </div>
                                            <p>Frame Rate:</p>
                                            <div class="menu"><select aria-label="Frame rate"><option>24 fps</option></select><svg class="arrows"><use href="#arrows"/></svg></div>
                                            <p>Time Remapping:</p>
                                            <div class="numbers inline">
                                                <label class="num"><input value="100" aria-label="Old"></label>
                                                <label class="num"><input value="100" aria-label="New"></label>
                                            </div>
                                        </div>
                                    </div>
                                </div>
                            </div>

                            <div class="panel">
                                <h2 class="open"><label><input type="checkbox" checked>Anti-Aliasing</label></h2>
                                <div class="content aa">
                                    <div class="columns">
                                        <div class="group samples">
                                            <button class="radio">5</button><button class="radio on">8</button><button class="radio">11</button><button class="radio">16</button>
                                        </div>
                                        <div class="menu"><select aria-label="Filter"><option>Mitchell-Netrav…</option></select><svg class="arrows"><use href="#arrows"/></svg></div>
                                    </div>
                                    <div class="columns">
                                        <div class="checks"><label><input type="checkbox">Full Sample</label></div>
                                        <div class="numbers inline"><label class="num">Size:<input value="1.000 px"></label></div>
                                    </div>
                                </div>
                            </div>

                            <div class="panel"><h2><label><input type="checkbox">Sampled Motion Blur</label></h2></div>
                            <div class="panel"><h2>Shading</h2></div>
                            <div class="panel"><h2>Performance</h2></div>
                            <div class="panel"><h2>Post Processing</h2></div>
                            <div class="panel"><h2>Metadata</h2></div>

                            <div class="panel">
                                <h2 class="open">Output</h2>
                                <div class="content output">
                                    <div class="group">
                                        <input class="field" value="/tmp\" aria-label="Output path">
                                        <button class="tool" aria-label="Browse"><svg class="icon"><use href="#folder"/></svg></button>
                                    </div>
                                    <div class="check-grid">
                                        <label class="lit"><input type="checkbox" checked>Overwrite</label>
                                        <label class="lit"><input type="checkbox" checked>File Extensions</label>
                                        <label><input type="checkbox">Placeholders</label>
                                        <label><input type="checkbox">Cache Result</label>
                                    </div>
                                    <div class="columns">
                                        <div class="menu"><svg class="icon"><use href="#image"/></svg><select aria-label="Format"><option>PNG</option></select><svg class="arrows"><use href="#arrows"/></svg></div>
                                        <div class="group samples">
                                            <button class="radio">BW</button><button class="radio">RGB</button><button class="radio on">RGBA</button>
                                        </div>
                                    </div>
                                    <div class="row">
                                        <span>Color Depth:</span>
                                        <div class="group samples"><button class="radio on">8</button><button class="radio">16</button></div>
                                    </div>
                                    <label class="slider compression">Compression:<input value="15%"></label>
                                </div>
                            </div>

                            <div class="panel"><h2>Bake</h2></div>
                            <div class="panel"><h2><label><input type="checkbox">Freestyle</label></h2></div>
                        </div>
                        <div class="scroll-v"><span></span></div>
                    </div>
                    <svg class="corner top"><use href="#corner"/></svg>
                    <svg class="corner bottom"><use href="#corner-b"/></svg>
                </section>
            </aside>
        </div>
    </div>

    <script>
        const svgNS = 'http://www.w3.org/2000/svg';

        function add(parent, tag, attrs) {
            const el = document.createElementNS(svgNS, tag);
            for (const key in attrs) el.setAttribute(key, attrs[key]);
            parent.appendChild(el);
            return el;
        }

        // 3D view mesh
        const outer3d = [[392.5, 232.5], [338.5, 237.5], [286.5, 253.5], [238.5, 278.5], [196.5, 313.5], [161.5, 355.5], [136.5, 403.5], [120.5, 454.5], [115.5, 509.5]];
        const inner3d = [[392.5, 344.5], [359.5, 347.5], [329.5, 356.5], [300.5, 372.5], [275.5, 392], [255.5, 417.5], [239.5, 446.5], [230.5, 476.5], [227.5, 509.5]];
        const mesh3d = document.getElementById('mesh3d');
        add(mesh3d, 'polygon', { points: outer3d.concat(inner3d.slice().reverse()).join(' '), fill: '#745a48', stroke: '#ff9a05' });
        outer3d.forEach((p, i) => {
            const q = inner3d[i];
            add(mesh3d, 'line', { x1: p[0], y1: p[1], x2: q[0], y2: q[1], stroke: '#ff9a05' });
        });
        outer3d.concat(inner3d).forEach(p => {
            add(mesh3d, 'rect', { x: p[0] - 1.5, y: p[1] - 1.5, width: 3, height: 3, fill: '#ff8500' });
        });

        // UV grid, a darker line every fourth
        const uvgrid = document.getElementById('uvgrid');
        for (let i = 1; i < 32; i++) {
            const x = Math.round(734.5 + i * 20.13) + 0.5;
            const y = Math.round(769 - i * 20.16) + 0.5;
            const color = i % 4 === 0 ? '#363636' : '#3e3e3e';
            add(uvgrid, 'path', { d: `M${x} 124v645M735 ${y}h644`, stroke: color });
        }

        // UV layout
        const outerUv = [[789.5, 454.5], [846.5, 406.5], [911.5, 370.5], [982.5, 348.5], [1056.5, 339.5], [1130.5, 346.5], [1201.5, 366.5], [1267.5, 401.5], [1325.5, 447.5]];
        const innerUv = [[899.5, 561.5], [933.5, 532.5], [972.5, 511.5], [1014.5, 498.5], [1058.5, 493.5], [1102.5, 497.5], [1144.5, 509.5], [1183.5, 529.5], [1218.5, 557.5]];
        const uvmesh = document.getElementById('uvmesh');
        add(uvmesh, 'polygon', { points: outerUv.concat(innerUv.slice().reverse()).join(' '), fill: '#fff', 'fill-opacity': 0.04 });

        function uvLine(points, color) {
            add(uvmesh, 'polyline', { points: points.join(' '), fill: 'none', stroke: '#000', 'stroke-width': 3 });
            add(uvmesh, 'polyline', { points: points.join(' '), fill: 'none', stroke: color });
        }

        outerUv.forEach((p, i) => {
            const q = innerUv[i];
            const grad = add(uvmesh, 'linearGradient', { id: 'edge' + i, gradientUnits: 'userSpaceOnUse', x1: p[0], y1: p[1], x2: q[0], y2: q[1] });
            add(grad, 'stop', { offset: 0, 'stop-color': '#ff8500' });
            add(grad, 'stop', { offset: 1, 'stop-color': '#ccc' });
            uvLine([p, q], `url(#edge${i})`);
        });
        uvLine(outerUv, '#ff8500');
        uvLine(innerUv, '#ccc');
        outerUv.forEach(p => add(uvmesh, 'rect', { x: p[0] - 1.5, y: p[1] - 1.5, width: 3, height: 3, fill: '#ff8500' }));
        innerUv.forEach(p => add(uvmesh, 'rect', { x: p[0] - 1.5, y: p[1] - 1.5, width: 3, height: 3, fill: '#000' }));

        // timeline
        const frames = document.getElementById('frames');
        const ruler = document.getElementById('ruler');
        add(frames, 'rect', { x: 281, y: 0, width: 1207, height: 46, fill: '#727272' });
        for (let f = -55; f <= 280; f += 5) {
            const x = Math.floor(280 + f * 4.835) + 0.5;
            const inside = f > 0 && f < 250;
            const major = f % 10 === 0;
            const color = inside ? (major ? '#5b5b5b' : '#696969') : (major ? '#333' : '#3d3d3d');
            add(frames, 'line', { x1: x, y1: 0, x2: x, y2: 46, stroke: color });
        }
        add(frames, 'rect', { x: 284, y: 0, width: 3, height: 46, fill: '#60c040' });
        for (let f = -50; f <= 280; f += 10) {
            const label = document.createElement('span');
            label.textContent = f;
            if (f < 0) label.className = 'negative';
            ruler.appendChild(label);
        }
    </script>
</body>
</html>
```

FILE: styles.css
```css
* {
    box-sizing: border-box;
}

body {
    margin: 0;
    font-family: "DejaVu Sans Condensed", "DejaVu Sans", sans-serif;
    font-size: 11px;
    color: #000;
    background-color: #000;
    overflow: hidden;
}

.sprite {
    position: absolute;
    width: 0;
    height: 0;
}

/* areas */
.app {
    display: grid;
    grid-template-rows: 26px minmax(0, 1fr);
    gap: 1px;
    height: 100vh;
}

.main {
    display: grid;
    grid-template-columns: minmax(0, 1fr) 252px;
    gap: 1px;
    min-height: 0;
}

.work {
    display: grid;
    grid-template-rows: minmax(0, 1fr) 90px;
    gap: 1px;
    min-height: 0;
}

.views {
    display: grid;
    grid-template-columns: minmax(0, 464fr) minmax(0, 1184fr);
    gap: 1px;
    min-height: 0;
}

.area {
    display: flex;
    flex-direction: column;
    min-height: 0;
}

.side {
    display: grid;
    grid-template-rows: 165px minmax(0, 1fr);
    gap: 1px;
    min-height: 0;
}

.viewport {
    position: relative;
    flex: 1;
    min-height: 0;
    overflow: hidden;
}

.view-3d {
    background-color: #393939;
}

.view-uv {
    background-color: #353535;
}

.canvas {
    display: block;
    width: 100%;
    height: 100%;
    shape-rendering: crispEdges;
}

.canvas circle {
    shape-rendering: auto;
}

.axis-y {
    fill: #0ec40e;
}

.axis-x {
    fill: #c40e0e;
}

.view-name,
.object-name {
    position: absolute;
    color: #fff;
}

.view-name {
    left: 20px;
    top: 11px;
}

.object-name {
    left: 70px;
    bottom: 7px;
}

.tab {
    position: absolute;
    top: 22px;
    width: 14px;
    height: 14px;
    padding: 0;
    border: none;
    background-color: #2b2b2b;
    color: #888;
    font: bold 13px/13px "DejaVu Sans", sans-serif;
}

.tab.left {
    left: 0;
    border-radius: 0 4px 4px 0;
}

.tab.right {
    right: 0;
    border-radius: 4px 0 0 4px;
}

.corner {
    position: absolute;
    width: 12px;
    height: 12px;
}

.corner.top {
    top: 0;
    right: 0;
}

.corner.bottom {
    bottom: 0;
    left: 0;
}

/* header bars */
.bar {
    position: relative;
    display: flex;
    align-items: flex-start;
    gap: 5px;
    height: 26px;
    flex: none;
    padding: 2px 0 0 9px;
    border-top: 1px solid #868686;
    background-color: #6b6b6b;
    overflow: hidden;
}

.topbar {
    padding-top: 3px;
    padding-left: 8px;
    background-color: #727272;
}

.view-bar {
    padding-left: 0;
}

.view-bar > .menu:first-child {
    margin-left: -2px;
}

.uv-bar {
    padding-left: 8px;
}

.menus {
    display: flex;
    gap: 21px;
    padding: 1px 8px 0;
    line-height: 20px;
}

.view-bar .menus,
.uv-bar .menus {
    padding-right: 6px;
}

.menus a {
    color: #000;
    text-decoration: none;
}

.icon {
    width: 16px;
    height: 16px;
    flex: none;
}

.arrows {
    width: 8px;
    height: 14px;
    flex: none;
    margin-left: auto;
}

/* widgets */
button,
input,
select {
    margin: 0;
    font: inherit;
    color: inherit;
}

.menu,
.tool,
.radio,
.field {
    display: flex;
    align-items: center;
    height: 20px;
    border: 1px solid #2b2b2b;
    border-radius: 4px;
    flex: none;
}

.menu {
    padding: 0 1px 0 3px;
    background: linear-gradient(#505050, #363636);
    color: #fff;
}

.menu select {
    flex: 1;
    min-width: 0;
    height: 18px;
    padding: 1px 0 0 3px;
    border: none;
    background: none;
    appearance: none;
    text-overflow: clip;
}

.tool {
    justify-content: center;
    width: 20px;
    padding: 0;
    background: linear-gradient(#a8a8a8, #8a8a8a);
}

.tool.text {
    padding: 0 2px;
}

.tool.text span {
    flex: 1;
    padding-top: 1px;
    text-align: center;
}

.tool.flat {
    background: #636363;
}

.tool.flip .icon {
    transform: scaleX(-1);
}

.radio {
    justify-content: center;
    width: 20px;
    padding: 0;
    background: linear-gradient(#444, #565656);
    color: #fff;
}

.radio.on {
    background: linear-gradient(#4a70b0, #6089cb);
    color: #000;
}

.field {
    padding: 1px 6px 0;
    background: linear-gradient(#999, #b0b0b0);
    outline: none;
}

label.field input {
    width: 100%;
    padding: 0 0 0 5px;
    border: none;
    background: none;
}

.w30 {
    width: 30px;
}

.w35 {
    width: 35px;
}

.group {
    display: flex;
}

.group > * {
    border-radius: 0;
}

.group > * + * {
    border-left: none;
}

.group > :first-child {
    border-radius: 4px 0 0 4px;
}

.group > :last-child {
    border-radius: 0 4px 4px 0;
}

.group > .field:not(.keying) {
    flex: 1;
    min-width: 0;
}

.grow {
    flex: 1;
}

.data-block {
    width: 192px;
}

.data-block .menu {
    width: 32px;
}

.engine {
    width: 111px;
    margin-left: 10px;
}

.engine select,
.sync select {
    padding-left: 4px;
}

.stats {
    display: flex;
    align-items: center;
    gap: 10px;
    height: 20px;
    margin-left: 13px;
}

.stats span {
    padding-top: 1px;
}

.mode {
    width: 99px;
}

.new-open .menu {
    width: 32px;
}

.new-open .tool {
    width: 60px;
}

.channel {
    width: 66px;
}

.uvmap {
    width: 131px;
}

/* number fields */
.numbers {
    border: 1px solid #333;
    border-radius: 10px;
    background-color: #333;
    overflow: hidden;
    display: flex;
    flex-direction: column;
    gap: 1px;
}

.numbers.inline {
    flex-direction: row;
    height: 20px;
    flex: none;
}

.num,
.slider {
    position: relative;
    display: flex;
    align-items: center;
    flex: none;
    min-width: 0;
    height: 19px;
    padding: 0 15px;
    background: linear-gradient(#a4a4a4, #b4b4b4);
    white-space: nowrap;
}

.numbers > :last-child {
    height: 18px;
}

.numbers.inline > * {
    flex: 1;
    height: 18px;
}

.num::before,
.num::after {
    content: "";
    position: absolute;
    top: 6px;
    border: 3px solid transparent;
}

.num::before {
    left: 3px;
    border-right: 4px solid #6e6e6e;
}

.num::after {
    right: 3px;
    border-left: 4px solid #6e6e6e;
}

.num input,
.slider input {
    flex: 1;
    width: 0;
    min-width: 0;
    padding: 0;
    border: none;
    background: none;
    text-align: right;
}

.frame-range {
    width: 228px;
}

.numbers .current {
    flex: none;
    width: 88px;
}

.slider.half {
    background: linear-gradient(90deg, #747474 53%, #aeaeae 53%);
}

.play {
    margin-left: 10px;
}

.sync {
    width: 115px;
    margin-right: 11px;
}

.keying {
    width: 131px;
    padding: 0 3px;
}

/* timeline */
.timeline {
    position: relative;
    display: flex;
    flex-direction: column;
    background-color: #727272;
    overflow: hidden;
}

.frames {
    display: block;
    width: 100%;
    height: 46px;
    background-color: #434343;
    shape-rendering: crispEdges;
}

.ruler {
    height: 13px;
    margin: 1px 4px 4px;
    border: 1px solid #444;
    border-radius: 7px;
    background: linear-gradient(#969696, #7c7c7c);
}

/* the last label hangs over the end of the ruler */
.ruler-labels {
    display: grid;
    grid-auto-flow: column;
    grid-auto-columns: minmax(0, 1fr);
    margin: 0 -8px 0 13px;
    line-height: 12px;
}

.ruler span {
    text-align: center;
}

.ruler .negative {
    padding-right: 7px;
}

/* outliner */
.outliner,
.properties {
    position: relative;
    display: flex;
    flex-direction: column;
    min-height: 0;
    background-color: #727272;
    border-left: 1px solid #868686;
    overflow: hidden;
}

.side-bar {
    padding-left: 8px;
    border-bottom: 1px solid #5a5a5a;
}

.display-mode {
    flex: 1;
    margin-left: 1px;
    border-radius: 4px 0 0 4px;
}

.display-mode select {
    padding-left: 4px;
}

.tree {
    display: flex;
    height: 121px;
    padding-top: 1px;
}

.tree ul {
    flex: 1;
    margin: 0;
    padding: 0;
    list-style: none;
}

.tree li {
    display: flex;
    height: 20px;
}

.tree li:nth-child(even) {
    background-color: #787878;
}

.tree .name {
    position: relative;
    display: flex;
    align-items: center;
    flex: 1;
    padding-left: 3px;
    white-space: nowrap;
}

.tree .active .name {
    background-color: #7c8388;
}

.tree .child .name {
    padding-left: 23px;
}

.tree .deep .name {
    padding-left: 28px;
}

.tree .bare .name {
    padding-left: 42px;
}

.tree .child .name::before {
    content: "";
    position: absolute;
    left: 26px;
    top: 0;
    bottom: 0;
    border-left: 1px solid #4a4a4a;
}

.tree .selected {
    color: #fff;
}

.tree .name .icon {
    position: relative;
    margin-right: 3px;
}

.tree b {
    display: flex;
    align-items: center;
    width: 20px;
    padding-left: 2px;
    border-left: 1px solid #616161;
}

.tree em {
    height: 12px;
    margin: 0 9px 0 10px;
    border-left: 1px solid #444;
}

.toggle {
    position: relative;
    width: 9px;
    height: 9px;
    margin-right: 9px;
    border: 1px solid #111;
    border-radius: 50%;
    background-color: #ddd;
    color: #000;
    font: bold 9px/7px "DejaVu Sans", sans-serif;
    text-align: center;
}

.deep .toggle {
    margin-right: 4px;
}

.tree .bare .name {
    padding-left: 41px;
}

.halo {
    overflow: visible;
    border-radius: 50%;
    background-color: #a2a2a2;
    box-shadow: 0 0 0 1px #a2a2a2;
}

.halo.orange {
    background-color: #b98246;
    box-shadow: 0 0 0 1px #b98246;
}

.halo.blue {
    background-color: #9a9eb4;
    box-shadow: 0 0 0 1px #9a9eb4;
}

.scroll-v {
    width: 13px;
    margin: 5px 4px 3px 0;
    border-radius: 7px;
    background-color: #5a5a5a;
}

.scroll-v span {
    display: block;
    height: 100%;
    border: 1px solid #444;
    border-radius: 7px;
    background: linear-gradient(90deg, #929292, #7d7d7d);
}

.scroll-h {
    height: 13px;
    margin: 1px 22px 0 4px;
    border-radius: 7px;
    background-color: #5a5a5a;
}

.scroll-h span {
    display: block;
    width: 78%;
    height: 100%;
    border: 1px solid #444;
    border-radius: 7px;
    background: linear-gradient(#959595, #7d7d7d);
}

/* properties */
.tabs {
    margin-left: 3px;
}

.tabs .radio:not(.on) .icon {
    opacity: 0.75;
}

.props-body {
    display: flex;
    flex: 1;
    min-height: 0;
}

.panels {
    flex: 1;
    min-width: 0;
    padding: 0 5px 0 4px;
    overflow: hidden;
}

.props-body .scroll-v span {
    height: 98%;
}

.context {
    display: flex;
    align-items: center;
    gap: 6px;
    height: 35px;
    padding: 2px 0 0 5px;
}

.context .icon + .icon {
    margin-right: -3px;
}

.panel {
    border-top: 1px solid #444;
    box-shadow: inset 0 1px #929292;
}

.panel h2 {
    position: relative;
    display: flex;
    align-items: center;
    height: 23px;
    margin: 0;
    padding-left: 20px;
    font-size: 12px;
    font-weight: normal;
}

.panel h2 label {
    display: flex;
    align-items: center;
}

.panel h2::before {
    content: "";
    position: absolute;
    left: 8px;
    top: 8px;
    border: 4px solid transparent;
    border-left: 8px solid #222;
    border-right: none;
}

.panel h2.open::before {
    border: 4px solid transparent;
    border-top: 8px solid #222;
    border-bottom: none;
}

.panel h2::after {
    content: "";
    position: absolute;
    right: 5px;
    top: 11px;
    width: 11px;
    height: 5px;
    background: repeating-linear-gradient(90deg, transparent 0 1px, #727272 1px 3px), repeating-linear-gradient(#ccc 0 1px, transparent 1px 2px);
}

.content {
    display: flex;
    flex-direction: column;
    gap: 5px;
    padding: 10px 3px 6px;
}

.content p {
    margin: 0;
    padding-left: 7px;
    line-height: 20px;
}

.content .menu select {
    padding-left: 4px;
}

.thirds .tool {
    flex: 1;
}

.thirds .tool span {
    margin: 0 -3px;
}

.row {
    display: flex;
    align-items: center;
    padding-left: 7px;
}

.row > :first-child {
    width: 70px;
}

.row .group {
    flex: 1;
}

.columns {
    display: grid;
    grid-template-columns: 105px minmax(0, 1fr);
    gap: 8px;
}

.samples .radio {
    flex: 1;
}

.checks {
    display: flex;
    align-items: center;
    gap: 16px;
    height: 22px;
    padding-left: 3px;
}

.checks label,
.check-grid label {
    display: flex;
    align-items: center;
    gap: 8px;
    line-height: 20px;
}

.disabled {
    color: #484848;
}

input[type="checkbox"] {
    position: relative;
    width: 14px;
    height: 14px;
    border: 1px solid #2b2b2b;
    border-radius: 4px;
    background: linear-gradient(#444, #575757);
    appearance: none;
}

input[type="checkbox"]:disabled {
    border-color: #505050;
    background: #686868;
}

input[type="checkbox"]:checked::after {
    content: "";
    position: absolute;
    left: 4px;
    top: -2px;
    width: 5px;
    height: 10px;
    border: solid #ddd;
    border-width: 0 2px 2px 0;
    transform: rotate(40deg);
}

.panel h2 input {
    margin-right: 6px;
}

.aa {
    gap: 2px;
}

.aa .checks {
    height: 20px;
}

.output {
    gap: 2px;
    padding-bottom: 9px;
}

.check-grid {
    display: grid;
    grid-template-columns: 113px 1fr;
    row-gap: 2px;
    padding: 3px 0 2px 3px;
}

.lit {
    color: #fff;
}

.compression {
    flex: none;
    height: 20px;
    padding-left: 12px;
    border: 1px solid #333;
    border-radius: 10px;
    background: linear-gradient(90deg, #7a7a7a 18%, #aeaeae 18%);
}
```
